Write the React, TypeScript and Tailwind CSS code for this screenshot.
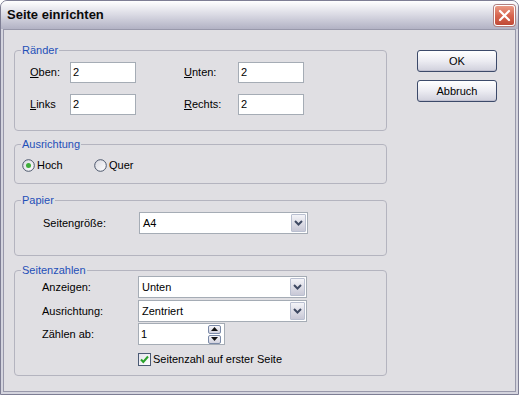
import React from "react";

const font = { fontFamily: '"Liberation Sans", Arial, sans-serif' };

function Group({
  title,
  className,
  children,
}: {
  title: string;
  className: string;
  children: React.ReactNode;
}) {
  return (
    <div className={`relative rounded-[4px] border border-[#b4b4bf] ${className}`}>
      <span className="absolute left-[6px] top-[-8px] bg-[#e0dfe3] px-[1px] text-[11px] leading-[14px] text-[#1f4fb8]">
        {title}
      </span>
      {children}
    </div>
  );
}

function Label({ u, rest, w }: { u?: string; rest: string; w: string }) {
  return (
    <span className={`${w} shrink-0 text-[11px] leading-[13px] text-black`}>
      {u && <span className="underline underline-offset-[1px]">{u}</span>}
      {rest}
    </span>
  );
}

function TextBox({ value, w }: { value: string; w: string }) {
  return (
    <div
      className={`${w} h-[21px] border border-[#a5acb5] bg-white pl-[2px] text-[11px] leading-[19px] text-black`}
    >
      {value}
    </div>
  );
}

function Combo({ value }: { value: string }) {
  return (
    <div className="flex h-[22px] w-[169px] items-stretch border border-[#a5acb5] bg-white">
      <div className="flex-1 pl-[3px] text-[11px] leading-[20px] text-black">{value}</div>
      <div className="m-[1px] flex w-[15px] items-center justify-center rounded-[1px] border border-[#b9bfd0] bg-gradient-to-b from-[#f4f4f8] to-[#c8c8d6]">
        <svg width="9" height="6" viewBox="0 0 9 6">
          <path d="M1 1 L4.5 4.5 L8 1" stroke="#3f4a63" strokeWidth="2" fill="none" />
        </svg>
      </div>
    </div>
  );
}

function Radio({ checked, label }: { checked?: boolean; label: string }) {
  return (
    <div className="flex items-center gap-[2px]">
      <svg width="13" height="13" viewBox="0 0 13 13">
        <defs>
          <linearGradient id="rg" x1="0" y1="0" x2="1" y2="1">
            <stop offset="0" stopColor="#d8d8e0" />
            <stop offset="1" stopColor="#ffffff" />
          </linearGradient>
        </defs>
        <circle cx="6.5" cy="6.5" r="5.8" fill="url(#rg)" stroke="#4b566b" strokeWidth="1" />
        {checked && <circle cx="6.5" cy="6.5" r="2.5" fill="#3fae3a" />}
      </svg>
      <span className="text-[11px] leading-[13px] text-black">{label}</span>
    </div>
  );
}

function Button({ label }: { label: string }) {
  return (
    <div className="flex h-[22px] w-[80px] items-center justify-center rounded-[3px] border border-[#3c4a6a] bg-gradient-to-b from-[#ffffff] via-[#ececf2] to-[#d0d0dc] text-[11px] text-black shadow-[inset_0_-1px_0_#c0c0d0]">
      {label}
    </div>
  );
}

export default function App() {
  return (
    <div
      style={font}
      className="flex h-[395px] w-[519px] flex-col overflow-hidden rounded-t-[7px] border border-[#7e7e94] bg-[#d4d4de]"
    >
      {/* title bar */}
      <div className="flex h-[28px] shrink-0 items-center justify-between bg-gradient-to-b from-[#ffffff] via-[#d9d9e3] to-[#b2b2c4] pl-[6px] pr-[3px]">
        <span className="text-[13px] font-bold text-[#0a0a0a]">Seite einrichten</span>
        <div className="flex h-[21px] w-[21px] items-center justify-center rounded-[3px] border border-white bg-gradient-to-b from-[#e99a85] via-[#d7654f] to-[#c04a37] shadow-[0_0_0_1px_#b08080]">
          <svg width="13" height="13" viewBox="0 0 13 13">
            <path d="M2 2 L11 11 M11 2 L2 11" stroke="#ffffff" strokeWidth="2.2" strokeLinecap="round" />
          </svg>
        </div>
      </div>

      {/* body */}
      <div className="mx-[2px] mb-[2px] flex flex-1 border border-[#9898aa] bg-[#e0dfe3] pl-[10px] pt-[20px]">
        <div className="flex w-[373px] flex-col">
          <Group title="Ränder" className="h-[81px] pl-[15px] pt-[11px]">
            <div className="flex items-center">
              <Label u="O" rest="ben:" w="w-[40px]" />
              <TextBox value="2" w="w-[66px]" />
              <span className="w-[48px]" />
              <Label u="U" rest="nten:" w="w-[54px]" />
              <TextBox value="2" w="w-[66px]" />
            </div>
            <div className="mt-[11px] flex items-center">
              <Label u="L" rest="inks" w="w-[40px]" />
              <TextBox value="2" w="w-[66px]" />
              <span className="w-[48px]" />
              <Label u="R" rest="echts:" w="w-[54px]" />
              <TextBox value="2" w="w-[66px]" />
            </div>
          </Group>

          <Group title="Ausrichtung" className="mt-[13px] h-[40px] pl-[7px] pt-[14px]">
            <div className="flex items-center">
              <div className="w-[72px]">
                <Radio checked label="Hoch" />
              </div>
              <Radio label="Quer" />
            </div>
          </Group>

          <Group title="Papier" className="mt-[16px] h-[56px] pl-[28px] pt-[11px]">
            <div className="flex items-center">
              <Label rest="Seitengröße:" w="w-[96px]" />
              <Combo value="A4" />
            </div>
          </Group>

          <Group title="Seitenzahlen" className="mt-[14px] h-[106px] pl-[27px] pt-[5px]">
            <div className="flex items-center">
              <Label rest="Anzeigen:" w="w-[96px]" />
              <Combo value="Unten" />
            </div>
            <div className="mt-[2px] flex items-center">
              <Label rest="Ausrichtung:" w="w-[96px]" />
              <Combo value="Zentriert" />
            </div>
            <div className="mt-[1px] flex items-center">
              <Label rest="Zählen ab:" w="w-[96px]" />
              <div className="flex h-[22px] w-[87px] items-center border border-[#a5acb5] bg-white">
                <span className="flex-1 pl-[2px] text-[11px] text-black">1</span>
                <div className="mr-[3px] flex flex-col gap-[1px]">
                  <div className="flex h-[9px] w-[13px] items-center justify-center rounded-[2px] border border-[#7b8aa8] bg-gradient-to-b from-[#f6f6fa] to-[#d2d2de]">
                    <svg width="7" height="4" viewBox="0 0 7 4">
                      <path d="M0 4 L3.5 0 L7 4 Z" fill="#111" />
                    </svg>
                  </div>
                  <div className="flex h-[9px] w-[13px] items-center justify-center rounded-[2px] border border-[#7b8aa8] bg-gradient-to-b from-[#f6f6fa] to-[#d2d2de]">
                    <svg width="7" height="4" viewBox="0 0 7 4">
                      <path d="M0 0 L7 0 L3.5 4 Z" fill="#111" />
                    </svg>
                  </div>
                </div>
              </div>
            </div>
            <div className="ml-[96px] mt-[8px] flex items-center gap-[2px]">
              <div className="flex h-[13px] w-[13px] items-center justify-center border border-[#4b5a74] bg-gradient-to-br from-[#e4e4ec] to-white">
                <svg width="11" height="11" viewBox="0 0 11 11">
                  <path d="M2 5.5 L4.3 8 L9 2.5" stroke="#2aa22a" strokeWidth="2" fill="none" />
                </svg>
              </div>
              <span className="text-[11px] leading-[13px] text-black">Seitenzahl auf erster Seite</span>
            </div>
          </Group>
        </div>

        <div className="ml-[30px] flex flex-col gap-[8px]">
          <Button label="OK" />
          <Button label="Abbruch" />
        </div>
      </div>
    </div>
  );
}
